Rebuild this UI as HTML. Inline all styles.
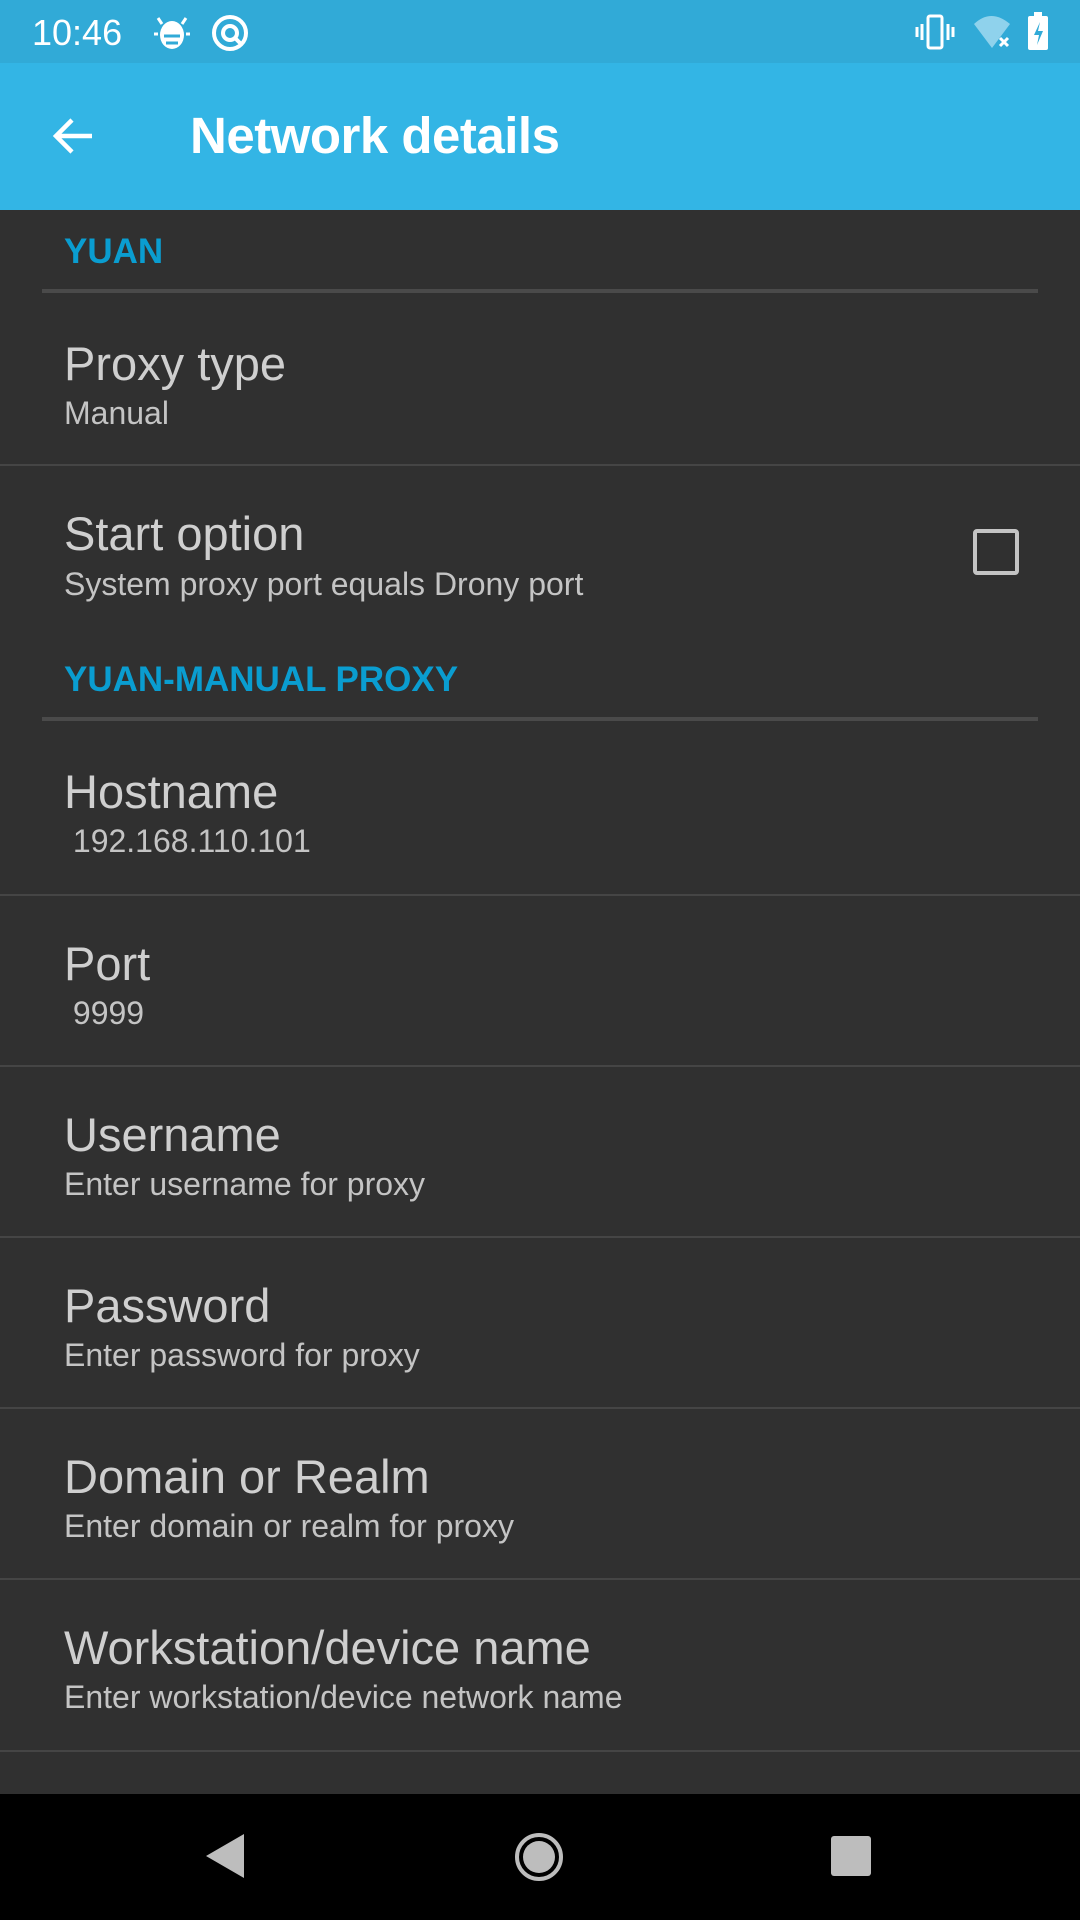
<!DOCTYPE html>
<html><head><meta charset="utf-8"><style>
*{margin:0;padding:0;box-sizing:border-box}
body{width:1080px;height:1920px;background:#303030;position:relative;overflow:hidden;font-family:"Liberation Sans",sans-serif}
.a{position:absolute;white-space:nowrap}
.t{font-size:47px;color:#cfcfcf;left:64px}
.s{font-size:32px;color:#c4c4c4;left:64px}
.h{font-size:35px;font-weight:bold;color:#0a9dd0;left:64px}
.d{position:absolute;left:42px;width:996px;height:4px;background:#4a4a4a}
.sep{position:absolute;left:0;width:1080px;height:2px;background:#454545}
</style></head><body>
<div class="a" style="left:0;top:0;width:1080px;height:63px;background:#31aad7"></div>
<div class="a" style="left:0;top:63px;width:1080px;height:147px;background:#33b5e5"></div>
<div class="a" style="left:32px;top:12px;font-size:36px;color:#fff">10:46</div>
<svg class="a" style="left:152px;top:12px" width="40" height="40" viewBox="0 0 40 40"><ellipse cx="20" cy="23" rx="12" ry="14" fill="#fff"/><path d="M10 12l-4-6M30 12l4-6M6 22H2M38 22h-4" stroke="#fff" stroke-width="3"/><path d="M12 24h16M14 31h12" stroke="#31aad7" stroke-width="3"/></svg>
<svg class="a" style="left:210px;top:13px" width="40" height="40" viewBox="0 0 40 40"><circle cx="20" cy="20" r="16" fill="none" stroke="#fff" stroke-width="4"/><circle cx="20" cy="20" r="7" fill="none" stroke="#fff" stroke-width="4"/><path d="M24 24l8 8" stroke="#fff" stroke-width="4"/></svg>
<svg class="a" style="left:915px;top:12px" width="40" height="40" viewBox="0 0 40 40"><rect x="13" y="4" width="14" height="32" rx="2" fill="none" stroke="#fff" stroke-width="3"/><path d="M7 12v16M2 15v10M33 12v16M38 15v10" stroke="#fff" stroke-width="3"/></svg>
<svg class="a" style="left:972px;top:12px" width="42" height="40" viewBox="0 0 42 40"><path d="M2 12 Q19 -4 38 12 L20 36Z" fill="#8fd2ec"/><path d="M28 26l8 8M36 26l-8 8" stroke="#fff" stroke-width="3"/></svg>
<svg class="a" style="left:1026px;top:12px" width="24" height="40" viewBox="0 0 24 40"><rect x="2" y="4" width="20" height="34" rx="2" fill="#fff"/><rect x="8" y="0" width="8" height="5" fill="#fff"/><path d="M14 10l-6 13h5l-2 10 6-14h-5z" fill="#31aad7"/></svg>
<svg class="a" style="left:50px;top:112px" width="48" height="48" viewBox="0 0 48 48"><path d="M42 24H8M22 8L6 24l16 16" fill="none" stroke="#fff" stroke-width="4.5"/></svg>
<div class="a" style="left:190px;top:106px;font-size:51px;font-weight:bold;color:#fff;letter-spacing:-0.5px">Network details</div>

<div class="a h" style="top:232px">YUAN</div>
<div class="d" style="top:289px"></div>
<div class="a t" style="top:336px">Proxy type</div>
<div class="a s" style="top:395px">Manual</div>
<div class="sep" style="top:464px"></div>
<div class="a t" style="top:506px">Start option</div>
<div class="a s" style="top:566px">System proxy port equals Drony port</div>
<div class="a" style="left:973px;top:529px;width:46px;height:46px;border:4px solid #c4c4c4;border-radius:4px"></div>
<div class="a h" style="top:660px">YUAN-MANUAL PROXY</div>
<div class="d" style="top:717px"></div>
<div class="a t" style="top:764px">Hostname</div>
<div class="a s" style="top:823px">&nbsp;192.168.110.101</div>
<div class="sep" style="top:894px"></div>
<div class="a t" style="top:936px">Port</div>
<div class="a s" style="top:995px">&nbsp;9999</div>
<div class="sep" style="top:1065px"></div>
<div class="a t" style="top:1107px">Username</div>
<div class="a s" style="top:1166px">Enter username for proxy</div>
<div class="sep" style="top:1236px"></div>
<div class="a t" style="top:1278px">Password</div>
<div class="a s" style="top:1337px">Enter password for proxy</div>
<div class="sep" style="top:1407px"></div>
<div class="a t" style="top:1449px">Domain or Realm</div>
<div class="a s" style="top:1508px">Enter domain or realm for proxy</div>
<div class="sep" style="top:1578px"></div>
<div class="a t" style="top:1620px">Workstation/device name</div>
<div class="a s" style="top:1679px">Enter workstation/device network name</div>
<div class="sep" style="top:1750px"></div>

<div class="a" style="left:0;top:1794px;width:1080px;height:126px;background:#000"></div>
<svg class="a" style="left:200px;top:1832px" width="48" height="48" viewBox="0 0 48 48"><path d="M44 2V46L6 24Z" fill="#bdbdbd"/></svg>
<svg class="a" style="left:514px;top:1832px" width="50" height="50" viewBox="0 0 50 50"><circle cx="25" cy="25" r="22" fill="none" stroke="#bdbdbd" stroke-width="4"/><circle cx="25" cy="25" r="16" fill="#bdbdbd"/></svg>
<div class="a" style="left:831px;top:1836px;width:40px;height:40px;background:#bdbdbd;border-radius:3px"></div>
</body></html>
